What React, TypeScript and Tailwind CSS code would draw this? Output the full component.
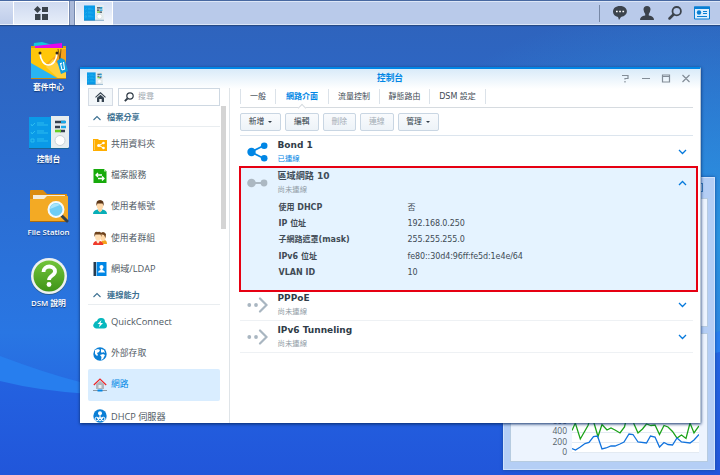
import React from 'react';
import clsx from 'clsx';

const tabs = [
  { label: '一般', width: 'w-[36px] border-l' },
  { label: '網路介面', width: 'w-[53px]', active: true },
  { label: '流量控制', width: 'w-[51px]' },
  { label: '靜態路由', width: 'w-[50px]' },
  { label: 'DSM 設定', width: 'w-[56px]' },
];

const actions = [
  { label: '新增', menu: true },
  { label: '編輯' },
  { label: '刪除', disabled: true },
  { label: '連線', disabled: true },
  { label: '管理', menu: true },
];

const details = [
  ['使用 DHCP', '否'],
  ['IP 位址', '192.168.0.250'],
  ['子網路遮罩(mask)', '255.255.255.0'],
  ['IPv6 位址', 'fe80::30d4:96ff:fe5d:1e4e/64'],
  ['VLAN ID', '10'],
];

const fileItems = [
  { icon: 'folder', label: '共用資料夾' },
  { icon: 'file', label: '檔案服務' },
  { icon: 'user', label: '使用者帳號' },
  { icon: 'group', label: '使用者群組' },
  { icon: 'ldap', label: '網域/LDAP', size: 'text-[9.2px]' },
];

const netItems = [
  { icon: 'cloud', label: 'QuickConnect', size: 'text-[9.4px]' },
  { icon: 'globe', label: '外部存取' },
  { icon: 'network', label: '網路', active: true },
  { icon: 'dhcp', label: 'DHCP 伺服器', size: 'text-[9.2px] leading-[11px]' },
];

function Wallpaper() {
  return (
    <svg className="absolute inset-0" width="720" height="475" viewBox="0 0 720 475">
      <defs>
        <linearGradient id="sky" x1="0" y1="0" x2="0" y2="1">
          <stop offset="0" stopColor="#2f62ba" />
          <stop offset=".3" stopColor="#2c6acb" />
          <stop offset=".7" stopColor="#2976e3" />
          <stop offset="1" stopColor="#2259df" />
        </linearGradient>
        <radialGradient id="glow" cx="1" cy=".5" r=".5">
          <stop offset="0" stopColor="#2b94e0" />
          <stop offset="1" stopColor="#2b94e0" stopOpacity="0" />
        </radialGradient>
        <linearGradient id="wave" x1="0" y1="0" x2="0" y2="1">
          <stop offset="0" stopColor="#2465e2" />
          <stop offset="1" stopColor="#2156da" />
        </linearGradient>
      </defs>
      <rect width="720" height="475" fill="url(#sky)" />
      <rect width="720" height="475" fill="url(#glow)" />
      <path d="M0 356 Q45 373 80 382 Q420 435 720 331 V475 H0Z" fill="#277eee" />
      <path d="M0 381 Q40 391 90 394 Q420 410 720 352 V475 H0Z" fill="url(#wave)" />
    </svg>
  );
}

function PanelIcon({ className }: { className: string }) {
  return (
    <svg className={className} viewBox="0 0 40 34" preserveAspectRatio="none">
      <path d="M0 1H22V33H0Z" fill="#0a9ae8" />
      <path d="M22 0H40V31L38 33H22Z" fill="#e6edef" />
      <path d="M0 32.500H40" stroke="#1c6397" />
      <path d="M2 8l1 2 3-3M8 9h11M8 7h7M2 16l1 2 3-3M8 17h11M8 15h7M2 23h3v3H2zM8 25h11M8 23h7" fill="none" stroke="#30bff0" strokeWidth=".9" />
      <path d="M26 6h10M26 11h5M31 15h5" stroke="#34414d" strokeWidth="2.600" />
      <path d="M32 6h5M32 11h5" stroke="#18a7e8" strokeWidth="2.600" />
      <path d="M26 15h6" stroke="#66ce21" strokeWidth="2.600" />
      <circle cx="31" cy="24.5" r="5" fill="#fff" stroke="#c9d3d8" />
    </svg>
  );
}

function PackageIcon() {
  return (
    <svg width="40" height="38" viewBox="0 0 40 38">
      <path d="M5 1l8-1 14 4v6H4z" fill="#13c8dd" />
      <path d="M6 4L33 1v6H6z" fill="#e408ec" />
      <path d="M2 4h4v4H2zM34 4h3v4h-3z" fill="#e09c0c" />
      <path d="M2 6h35v31H2z" fill="#ffc60a" />
      <path d="M17 22L34 7h3v27z" fill="#f6a31b" />
      <path d="M2 21l28 16H2z" fill="#29b5f2" />
      <path d="M30 37L17 25l7-8 13 14v6z" fill="#ffd13c" />
      <path d="M2 36.500h35" stroke="#c38b16" />
      <path d="M11 11c1 16 16 16 17 0" fill="none" stroke="#fff" strokeWidth="1.700" />
      <circle cx="11" cy="11" r="1.500" fill="#3a2a13" />
      <circle cx="28" cy="11" r="1.500" fill="#3a2a13" />
      <path d="M29 7l2 11M32 7l-1 11" stroke="#7a5219" fill="none" />
      <path d="M28 19l4-3 4 2 3 11-7 3z" fill="#129ede" />
      <path d="M31.500 21l1.500 7M34.500 20l1 7M31 22l2-1M33 28l3-1" stroke="#fff" strokeWidth="1.100" />
    </svg>
  );
}

function FileStationIcon() {
  return (
    <svg width="40" height="34" viewBox="0 0 40 34">
      <path d="M1 2Q1 1 2 1h12l4 4h20v9H1z" fill="#db8c10" />
      <path d="M4 6h32v6H4z" fill="#f4eddd" />
      <path d="M1 10h14l3-3h21v25q0 1-1 1H2q-1 0-1-1z" fill="#f3aa24" />
      <path d="M1 32.500h38" stroke="#a96b11" />
      <path d="M33 27l5 5" stroke="#32414d" strokeWidth="3" strokeLinecap="round" />
      <circle cx="27" cy="20.500" r="7.500" fill="#6fcdf5" stroke="#f4fafc" strokeWidth="2" />
      <path d="M21 20a6 6 0 0 1 10-4z" fill="#a9e4fb" />
    </svg>
  );
}

function HelpIcon() {
  return (
    <svg width="38" height="39" viewBox="0 0 38 39">
      <defs>
        <linearGradient id="help" x1="0" y1="0" x2="0" y2="1">
          <stop stopColor="#73c43b" />
          <stop offset="1" stopColor="#3f9418" />
        </linearGradient>
      </defs>
      <circle cx="19" cy="20" r="18" fill="#286094" />
      <circle cx="19" cy="19" r="18" fill="#eef1f1" />
      <circle cx="19" cy="19" r="15.500" fill="url(#help)" />
      <path d="M13.500 15c0-7.500 11.500-7 11.500-.5 0 4-6 4-6 8.500" fill="none" stroke="#fff" strokeWidth="3.800" />
      <circle cx="19" cy="27.500" r="2.400" fill="#fff" />
    </svg>
  );
}

function SideIcon({ name }: { name: string }) {
  return (
    <svg className="shrink-0" width="14" height="14" viewBox="0 0 14 14">
      {name === 'folder' && (
        <>
          <path d="M0 1h5l1 1h8v11H0z" fill="#ffae00" />
          <path d="M1.500 2v10" stroke="#ffd980" strokeWidth=".7" />
          <path d="M10.500 5L6 7.500l4.500 2.500" fill="none" stroke="#fff" />
          <circle cx="5.700" cy="7.500" r="1.600" fill="#fff" />
          <circle cx="10.500" cy="5" r="1.300" fill="#fff" />
          <circle cx="10.500" cy="10" r="1.300" fill="#fff" />
        </>
      )}
      {name === 'file' && (
        <>
          <path d="M.5 0H11l2.500 2.500V14H.5z" fill="#17aa0b" />
          <path d="M11 0v2.500h2.500z" fill="#a7e29f" />
          <path d="M9 6H3M5 4L3 6l2 2M5 9.500h6M9 7.500l2 2-2 2" fill="none" stroke="#fff" strokeWidth="1.300" />
        </>
      )}
      {name === 'user' && (
        <>
          <path d="M0 14q0-4 5-4.500h4q5 .5 5 4.500z" fill="#08aeb7" />
          <path d="M5 8h4v2.500l-2 2-2-2z" fill="#ffd1a0" />
          <ellipse cx="7" cy="5.500" rx="3.300" ry="4" fill="#ffd9aa" />
          <path d="M3.500 6Q2.500 0 7 0t3.500 6L9.500 3.500h-5z" fill="#5b3517" />
        </>
      )}
      {name === 'group' && (
        <>
          <path d="M8 13q0-4 3-4t3 4z" fill="#f3a41b" />
          <ellipse cx="10" cy="6" rx="2.700" ry="4" fill="#ffd9aa" />
          <path d="M7 3q3-4 6 0l-.5 4-1.500-3z" fill="#6f431d" />
          <path d="M0 14q0-4 5-4.500 5 .5 5.500 4.500z" fill="#ef3a2b" />
          <path d="M3.500 8h3v3L5 12.500 3.500 11z" fill="#fff0d7" />
          <ellipse cx="5" cy="5.700" rx="3" ry="3.700" fill="#ffdfb5" />
          <path d="M1.500 6Q.5 0 5 1q4-1 3.500 5l-1-2.500h-5z" fill="#6f431d" />
        </>
      )}
      {name === 'ldap' && (
        <>
          <path d="M.5 0H3v14H.5z" fill="#263b50" />
          <path d="M3.500 0h10v14h-10z" fill="#0086e5" />
          <path d="M5 10.500q0-2 2.500-2.500V7q-1-1-1-2 0-2 2-2t2 2q0 1-1 2v1q2.500.5 2.500 2.500z" fill="#fff" />
        </>
      )}
      {name === 'cloud' && (
        <>
          <path d="M3 12.500A3 3 0 0 1 1 7.500Q1.500 5 4 5q1-3.500 4.500-3Q12 2 12 6q2 1 2 3.500 0 3-3 3z" fill="#08b8be" />
          <path d="M8.500 4L4.500 8h2.300l-1 3.500L10 7H7.500z" fill="#fff" />
        </>
      )}
      {name === 'globe' && (
        <>
          <circle cx="7" cy="7" r="6.700" fill="#0a7fd6" />
          <path d="M2 3l3-1 2 1-1 2-2 1 1 2-1 1-2-2zM8 2l3 1 1 3-2-1-1 1-1-1zM7 8l3-1 2 1-2 4-2 1 .5-3z" fill="#fff" />
        </>
      )}
      {name === 'network' && (
        <>
          <path d="M3 6l4-3 4 3v5H3z" fill="#aeb6be" />
          <path d="M5.500 7h3v3h-3z" fill="#e8edf0" />
          <path d="M.8 7L7 1l6.200 6" fill="none" stroke="#ef2525" strokeWidth="1.200" />
          <path d="M0 12.500h14" stroke="#8e9aa5" />
          <path d="M4.500 11.500h5v2h-5z" fill="#0086e5" />
        </>
      )}
      {name === 'dhcp' && (
        <>
          <circle cx="7" cy="7" r="6.700" fill="#0a7fd6" />
          <path d="M7 5v3L4 10M7 8l3 2" fill="none" stroke="#fff" />
          <circle cx="7" cy="4.200" r="2" fill="#fff" />
          <circle cx="3.800" cy="10" r="1.800" fill="none" stroke="#fff" />
          <circle cx="7" cy="10.500" r="1.300" fill="none" stroke="#fff" />
          <circle cx="10.200" cy="10" r="1.800" fill="none" stroke="#fff" />
        </>
      )}
    </svg>
  );
}

function Chevron({ up }: { up?: boolean }) {
  return (
    <svg width="9" height="6" viewBox="0 0 9 6" className={clsx('shrink-0', up && 'rotate-180')}>
      <path d="M1 1l3.500 3.500L8 1" fill="none" stroke="#0579dc" strokeWidth="1.300" />
    </svg>
  );
}

function DesktopItem({ label, height, children }: { label: string; height: string; children: React.ReactNode }) {
  return (
    <div className={clsx('flex w-[97px] flex-col items-center', height)}>
      <div className="flex h-[39px] items-center">{children}</div>
      <span className="mt-[2px] whitespace-nowrap font-['Open_Sans','Noto_Sans_CJK_TC',sans-serif] text-[7.8px] leading-[11px] font-semibold text-white [text-shadow:0_1px_1px_#123b7a]">{label}</span>
    </div>
  );
}

function SectionHead({ label }: { label: string }) {
  return (
    <div className="flex h-[18px] w-[132px] items-center gap-[6px] border-b border-[#e9edf0] pl-[5px] text-[8.2px] font-bold text-[#3d7192]">
      <svg width="8" height="6" viewBox="0 0 8 6">
        <path d="M.5 5L4 1.500 7.500 5" fill="none" stroke="#3d7192" strokeWidth="1.100" />
      </svg>
      {label}
    </div>
  );
}

function SideItem({ icon, label, active, size = 'text-[8.8px]' }: { icon: string; label: string; active?: boolean; size?: string }) {
  return (
    <div className={clsx('flex h-[31.2px] w-[132px] shrink-0 items-center gap-1 rounded-xs pl-[5px]', size, active ? 'bg-[#d9edff] text-[#0086e5]' : 'text-[#505a64]')}>
      <SideIcon name={icon} />
      <span className="font-['Open_Sans','Noto_Sans_CJK_TC',sans-serif] whitespace-nowrap">{label}</span>
    </div>
  );
}

function InterfaceRow({ kind, title, status, active }: { kind: string; title: string; status: string; active?: boolean }) {
  return (
    <div className="flex h-[32px] shrink-0 items-center border-b border-[#eef1f4] pr-[6px] pl-[7px]">
      <svg width="21" height="20" viewBox="0 0 21 20" className="shrink-0">
        {kind === 'bond' ? (
          <g fill="#0086e5" stroke="#0086e5">
            <path d="M17 3.500L4 10l13 6.500" fill="none" strokeWidth="1.600" />
            <circle cx="4.500" cy="10" r="4.200" stroke="none" />
            <circle cx="17.200" cy="3.700" r="3.300" stroke="none" />
            <circle cx="17.200" cy="16.300" r="3.300" stroke="none" />
          </g>
        ) : (
          <g fill="#a9b6c1">
            <circle cx="2.300" cy="10" r="1.900" />
            <circle cx="9" cy="10" r="1.900" />
            <path d="M13 3.500l6.500 6.500-6.500 6.500" fill="none" stroke="#a9b6c1" strokeWidth="2.200" strokeLinecap="round" />
          </g>
        )}
      </svg>
      <div className="ml-[9.5px] flex-1">
        <div className="text-[9px] leading-[13px] font-bold text-[#303c48]">{title}</div>
        <div className={clsx('text-[7.4px] leading-[13px]', active ? 'text-[#0086e5]' : 'text-[#919ca6]')}>{status}</div>
      </div>
      <Chevron />
    </div>
  );
}

function Taskbar() {
  return (
    <div className="relative flex h-[25px] items-stretch border-t border-[#4768a1] bg-[#b9caea] shadow-[0_1px_1px_#244986]">
      <div className="w-[13px] border-y border-[#e8eef9] bg-linear-to-b from-[#d4def2] to-[#bfcdea]" />
      <div className="flex w-[56px] items-center justify-center border border-white bg-linear-to-b from-[#cfdaf0] to-[#e6edf9]">
        <svg width="14" height="14" viewBox="0 0 14 14" fill="#3a424b">
          <path d="M3.500 0L7 3.500 3.500 7 0 3.500z" />
          <path d="M8 1h6v5H8zM1 8h5.500v6H1zM8 8h6v6H8z" />
        </svg>
      </div>
      <div className="w-[6px] border-x border-[#7387ad] bg-[#aab9d9]" />
      <div className="flex w-[38px] items-center justify-center border border-white bg-linear-to-b from-[#d6e1f5] to-[#f3f6fc]">
        <PanelIcon className="h-[16px] w-[20px]" />
      </div>
      <div className="flex flex-1 items-center justify-end border-y border-[#dce6f7] pr-[10px]">
        <div className="mr-[13px] h-[17px] w-px bg-[#7788a6]" />
        <svg width="14" height="14" viewBox="0 0 14 14">
          <path d="M7 0c9 0 9 10 1 11l-2 3-1-3c-7-1-7-11 2-11" fill="#3c434c" />
          <path d="M3 5.500h1.700M6.200 5.500h1.700M9.400 5.500h1.700" stroke="#fff" strokeWidth="1.700" />
        </svg>
        <svg className="ml-[13px]" width="14" height="14" viewBox="0 0 14 14">
          <path d="M3.500 3.500Q3.500 0 7 0t3.500 3.500Q10 7 8.800 8v1.500q5.200.5 5.200 4.500H0q0-4 5.200-4.500V8Q4 7 3.500 3.500" fill="#3c434c" />
        </svg>
        <svg className="ml-[14px]" width="14" height="14" viewBox="0 0 14 14">
          <circle cx="8.700" cy="5.200" r="4.200" fill="none" stroke="#3c434c" strokeWidth="1.800" />
          <path d="M5.500 8.500L1.500 12.500" stroke="#3c434c" strokeWidth="2.500" strokeLinecap="round" />
        </svg>
        <svg className="ml-[12px]" width="16" height="14" viewBox="0 0 16 14">
          <path d="M.5 1h15v12H.5z" fill="#dceffe" stroke="#087fd3" />
          <path d="M0 .5h16v2.500H0z" fill="#087fd3" />
          <circle cx="5" cy="6.500" r="2.200" fill="#087fd3" />
          <path d="M9 5.500h4M9 7.500h4M3 10.500h10" stroke="#087fd3" />
        </svg>
      </div>
    </div>
  );
}

function ResourceWidget() {
  return (
    <div className="absolute top-[177px] left-[503px] flex h-[293px] w-[212px] flex-col border border-[#d0e2fb] bg-[#b4cef5] px-[6px] pb-[7px] shadow-[0_0_3px_#164895]">
      <div className="flex h-[20px] justify-end pt-[5px] pr-[5px]">
        <div className="h-[9px] w-[3px] border border-[#397ab6]" />
      </div>
      <div className="h-[129px] border border-[#b6cbe0] bg-[#edf4fe]" />
      <div className="mt-[6px] flex flex-1 items-end gap-[5px] border border-[#b6cbe0] bg-[#edf4fe] pr-[8px] pb-[4px]">
        <div className="w-[56px] text-right font-['Open_Sans',sans-serif] text-[8.5px] leading-[10.2px] text-[#555f6a]">
          <div>600</div>
          <div>400</div>
          <div>200</div>
          <div>0</div>
        </div>
        <svg className="mb-[4px] bg-white" width="127" height="42" viewBox="0 0 127 42">
          <path d="M0 21.500h127M0 31.500h127M0 41.500h127" stroke="#e3eaf2" />
          <polyline
            points="0,19.5 3.3,12 8.3,28 16,14.5 19,5 22,12 26,25.5 30,13.5 35,19 39,17 43,19 48,22 52.5,16 55,5 60,5 62,13 66,22 70.5,18 74.5,13 79,14.5 83,14 87.5,23.5 92,14.5 96,16 100.5,20.5 105,27 109.5,24 114,27.5 118,12 122,22 127,15"
            fill="none"
            stroke="#1ba218"
            strokeWidth="1.300"
          />
          <polyline
            points="0,37.5 3.5,39 8.3,36 13,32.5 17,31.5 21.5,25.5 25.5,25 30,38 34,37 39,35 43,35 48,33 52,31 57,23 61,23.5 66,31 74.5,32 78.5,25 83,26 87.5,36 92,31.5 96,33.5 100.5,34 105,27 109.5,31 118,32 122,29 127,23.5"
            fill="none"
            stroke="#1273dd"
            strokeWidth="1.300"
          />
        </svg>
      </div>
    </div>
  );
}

function ControlPanel() {
  return (
    <div className="absolute top-[67px] left-[80px] flex h-[356px] w-[621px] flex-col border-t-2 border-r border-t-[#0086e5] border-r-[#bac7d4] bg-white bg-[linear-gradient(#d9ebf9,#ffffff_20px)] shadow-[0_1px_3px_#092c68]">
      <div className="relative flex h-[19px] shrink-0 items-center pl-[7px]">
        <PanelIcon className="h-[13px] w-[16px]" />
        <div className="absolute inset-x-0 text-center text-[8.7px] font-bold text-[#0086e5]">控制台</div>
        <svg className="ml-auto mr-[9px]" width="70" height="9" viewBox="0 0 70 9" fill="none" stroke="#838d97">
          <path d="M1 1.500h6v3H4v1M4 7v1.500M21 4.500h8M41.500 1h7v7h-7zM41 2.500h8M61.500 1l7 7M68.500 1l-7 7" strokeWidth="1.200" />
        </svg>
      </div>
      <div className="flex min-h-0 flex-1">
        <aside className="flex w-[150px] shrink-0 flex-col overflow-hidden border-r border-[#dfe4e8] pl-[8px]">
          <div className="flex h-[18px] shrink-0 gap-[5px]">
            <div className="flex w-[25px] items-center justify-center border border-[#d5dce5] bg-[#f3f7fa]">
              <svg width="11" height="10" viewBox="0 0 11 10">
                <path d="M2 5.700l3.500-3 3.500 3V10H6.700V7H4.300v3H2z" fill="#354350" />
                <path d="M.5 5.300l5-4.500 5 4.500" fill="none" stroke="#354350" strokeWidth="1.100" />
              </svg>
            </div>
            <div className="flex w-[102px] items-center gap-1 border border-[#ced8e2] pl-[5px] text-[8px] text-[#a0a8af]">
              <svg width="10" height="10" viewBox="0 0 10 10" fill="none" stroke="#303b46">
                <circle cx="6" cy="4" r="3.200" strokeWidth="1.200" />
                <path d="M3.500 6.500L.8 9.200" strokeWidth="1.800" />
              </svg>
              搜尋
            </div>
          </div>
          <div className="flex min-h-0 flex-1">
            <div className="flex w-[133px] flex-col overflow-hidden pt-[3px]">
              <div>
                <SectionHead label="檔案分享" />
              </div>
              <div className="mt-[2px]">
                {fileItems.map((item) => <SideItem key={item.label} {...item} />)}
              </div>
              <div className="mt-[2px]">
                <SectionHead label="連線能力" />
              </div>
              <div className="mt-[2px]">
                {netItems.map((item) => <SideItem key={item.label} {...item} />)}
              </div>
            </div>
            <div className="h-[123px] w-[5px] bg-[#d4d4d4]" />
          </div>
        </aside>
        <main className="flex min-w-0 flex-1 flex-col pt-px pr-[7px] pl-[10px]">
          <nav className="flex h-[19px] shrink-0 items-start border-b border-[#d6dbe0] text-[8px] text-[#414b55]">
            {tabs.map((tab) => (
              <div key={tab.label} className={clsx('relative flex h-[15px] items-center justify-center border-r border-[#dbe2e9] whitespace-nowrap', tab.width, tab.active && 'font-bold text-[#0086e5]')}>
                {tab.label}
                {tab.active && <div className="absolute -bottom-[7px] size-[6px] rotate-45 border-t border-l border-[#d6dbe0] bg-white" />}
              </div>
            ))}
          </nav>
          <div className="flex h-[28px] shrink-0 items-center gap-1 border-b border-[#dce5ee] text-[7.8px] text-[#303c48]">
            {actions.map((a) => (
              <button key={a.label} className={clsx('flex h-[18px] items-center justify-center gap-1 rounded-xs border border-[#c9d6e3] bg-linear-to-b from-[#f9fbfd] to-[#edf3f8]', a.menu ? 'w-[41px]' : 'w-[33.5px]', a.disabled && 'text-[#a4adb6]')}>
                {a.label}
                {a.menu && <span className="size-0 border-x-[2px] border-t-[2px] border-x-transparent border-t-[#303c48]" />}
              </button>
            ))}
          </div>
          <InterfaceRow kind="bond" title="Bond 1" status="已連線" active />
          <section className="-mt-[2px] -ml-px h-[126px] w-[459px] shrink-0 border-2 border-[#e60012] bg-[#e5f3ff] pl-[6px]">
            <div className="mb-[3px] flex h-[29px] items-center pr-[9px]">
              <svg width="21" height="12" viewBox="0 0 21 12" fill="#acb8c2">
                <path d="M5 5h13v2H5z" />
                <circle cx="4.500" cy="6" r="4.300" />
                <circle cx="17" cy="6" r="3.400" />
              </svg>
              <div className="ml-[9.5px] flex-1">
                <div className="text-[9.1px] leading-[13px] font-bold text-[#414d59]">區域網路 10</div>
                <div className="text-[7.4px] leading-[13px] text-[#919ca6]">尚未連線</div>
              </div>
              <Chevron up />
            </div>
            <dl className="pl-[31.5px]">
              {details.map(([name, value]) => (
                <div key={name} className="flex h-[16.2px] items-center text-[8px] text-[#414b55]">
                  <dt className="w-[129px] font-bold">{name}</dt>
                  <dd className="tracking-[-0.1px]">{value}</dd>
                </div>
              ))}
            </dl>
          </section>
          <div className="-mt-[3px]">
            <InterfaceRow kind="tunnel" title="PPPoE" status="尚未連線" />
            <InterfaceRow kind="tunnel" title="IPv6 Tunneling" status="尚未連線" />
          </div>
        </main>
      </div>
    </div>
  );
}

export default function App() {
  return (
    <div className="relative h-[475px] w-[720px] overflow-hidden bg-[#2c6acb] font-['DejaVu_Sans','Noto_Sans_CJK_TC',sans-serif]">
      <Wallpaper />
      <Taskbar />
      <div className="relative flex flex-col pt-[16px]">
        <DesktopItem label="套件中心" height="h-[72px]"><PackageIcon /></DesktopItem>
        <DesktopItem label="控制台" height="h-[73px]"><PanelIcon className="h-[34px] w-[40px]" /></DesktopItem>
        <DesktopItem label="File Station" height="h-[71px]"><FileStationIcon /></DesktopItem>
        <DesktopItem label="DSM 說明" height="h-[60px]"><HelpIcon /></DesktopItem>
      </div>
      <ResourceWidget />
      <ControlPanel />
    </div>
  );
}
